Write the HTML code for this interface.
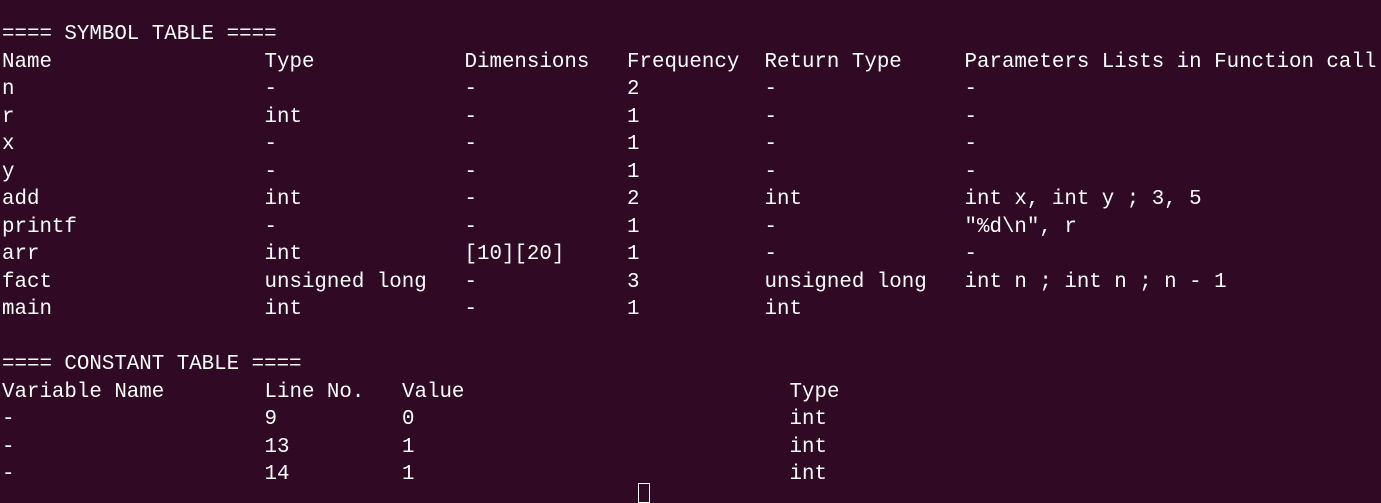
<!DOCTYPE html>
<html><head><style>
html,body{margin:0;padding:0;background:#300a24;width:1381px;height:488px;overflow:hidden}
.r{position:absolute;left:0;height:27.5px;width:1381px}
.r span{position:absolute;top:0;white-space:pre;font-family:"Liberation Mono",monospace;font-size:20.8px;line-height:27.5px;color:#fff}
.c0{left:2px}.c21{left:264.5px}.c37{left:464.5px}.c50{left:627px}.c61{left:764.5px}.c77{left:964.5px}.c32{left:402px}.c63{left:789.5px}
#cur{position:absolute;left:638px;top:483px;width:12px;height:20px;border:1px solid #fff;box-sizing:border-box}
</style></head><body>
<div class="r" style="top:21px"><span class="c0">==== SYMBOL TABLE ====</span></div>
<div class="r" style="top:48.5px"><span class="c0">Name</span><span class="c21">Type</span><span class="c37">Dimensions</span><span class="c50">Frequency</span><span class="c61">Return Type</span><span class="c77">Parameters Lists in Function call</span></div>
<div class="r" style="top:76px"><span class="c0">n</span><span class="c21">-</span><span class="c37">-</span><span class="c50">2</span><span class="c61">-</span><span class="c77">-</span></div>
<div class="r" style="top:103.5px"><span class="c0">r</span><span class="c21">int</span><span class="c37">-</span><span class="c50">1</span><span class="c61">-</span><span class="c77">-</span></div>
<div class="r" style="top:131px"><span class="c0">x</span><span class="c21">-</span><span class="c37">-</span><span class="c50">1</span><span class="c61">-</span><span class="c77">-</span></div>
<div class="r" style="top:158.5px"><span class="c0">y</span><span class="c21">-</span><span class="c37">-</span><span class="c50">1</span><span class="c61">-</span><span class="c77">-</span></div>
<div class="r" style="top:186px"><span class="c0">add</span><span class="c21">int</span><span class="c37">-</span><span class="c50">2</span><span class="c61">int</span><span class="c77">int x, int y ; 3, 5</span></div>
<div class="r" style="top:213.5px"><span class="c0">printf</span><span class="c21">-</span><span class="c37">-</span><span class="c50">1</span><span class="c61">-</span><span class="c77">"%d\n", r</span></div>
<div class="r" style="top:241px"><span class="c0">arr</span><span class="c21">int</span><span class="c37">[10][20]</span><span class="c50">1</span><span class="c61">-</span><span class="c77">-</span></div>
<div class="r" style="top:268.5px"><span class="c0">fact</span><span class="c21">unsigned long</span><span class="c37">-</span><span class="c50">3</span><span class="c61">unsigned long</span><span class="c77">int n ; int n ; n - 1</span></div>
<div class="r" style="top:296px"><span class="c0">main</span><span class="c21">int</span><span class="c37">-</span><span class="c50">1</span><span class="c61">int</span></div>
<div class="r" style="top:351px"><span class="c0">==== CONSTANT TABLE ====</span></div>
<div class="r" style="top:378.5px"><span class="c0">Variable Name</span><span class="c21">Line No.</span><span class="c32">Value</span><span class="c63">Type</span></div>
<div class="r" style="top:406px"><span class="c0">-</span><span class="c21">9</span><span class="c32">0</span><span class="c63">int</span></div>
<div class="r" style="top:433.5px"><span class="c0">-</span><span class="c21">13</span><span class="c32">1</span><span class="c63">int</span></div>
<div class="r" style="top:461px"><span class="c0">-</span><span class="c21">14</span><span class="c32">1</span><span class="c63">int</span></div>
<div id="cur"></div>
</body></html>
